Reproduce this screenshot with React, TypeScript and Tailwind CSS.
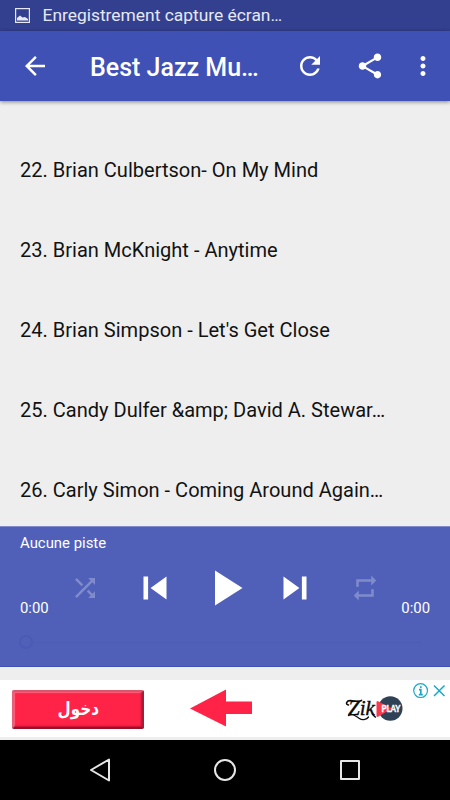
import React from 'react';

interface IconProps {
  path: string;
  className?: string;
}

const ICONS = {
  back: 'M20 11H7.83l5.59-5.59L12 4l-8 8 8 8 1.41-1.41L7.83 13H20v-2z',
  refresh:
    'M17.65 6.35C16.2 4.9 14.21 4 12 4c-4.42 0-7.99 3.58-7.99 8s3.57 8 7.99 8c3.73 0 6.84-2.55 7.73-6h-2.08c-.82 2.33-3.04 4-5.65 4-3.31 0-6-2.69-6-6s2.69-6 6-6c1.66 0 3.14.69 4.22 1.78L13 11h7V4l-2.35 2.35z',
  share:
    'M18 16.08c-.76 0-1.44.3-1.96.77L8.91 12.7c.05-.23.09-.46.09-.7s-.04-.47-.09-.7l7.05-4.11c.54.5 1.25.81 2.04.81 1.66 0 3-1.34 3-3s-1.34-3-3-3-3 1.34-3 3c0 .24.04.47.09.7L8.04 9.81C7.5 9.31 6.79 9 6 9c-1.66 0-3 1.34-3 3s1.34 3 3 3c.79 0 1.5-.31 2.04-.81l7.12 4.16c-.05.21-.08.43-.08.65 0 1.61 1.31 2.92 2.92 2.92 1.61 0 2.92-1.31 2.92-2.92s-1.31-2.92-2.92-2.92z',
  more: 'M12 8c1.1 0 2-.9 2-2s-.9-2-2-2-2 .9-2 2 .9 2 2 2zm0 2c-1.1 0-2 .9-2 2s.9 2 2 2 2-.9 2-2-.9-2-2-2zm0 6c-1.1 0-2 .9-2 2s.9 2 2 2 2-.9 2-2-.9-2-2-2z',
  shuffle:
    'M10.59 9.17L5.41 4 4 5.41l5.17 5.17 1.42-1.41zM14.5 4l2.04 2.04L4 18.59 5.41 20 17.96 7.46 20 9.5V4h-5.5zm.33 9.41l-1.41 1.41 3.13 3.13L14.5 20H20v-5.5l-2.04 2.04-3.13-3.13z',
  previous: 'M6 6h2.4v12H6zM9.7 12l8.3 6V6z',
  play: 'M8 5v14l11-7z',
  next: 'M6 18l8.3-6L6 6zM15.6 6H18v12h-2.4z',
  repeat: 'M7 7h10v3l4-4-4-4v3H5v6h2V7zm10 10H7v-3l-4 4 4 4v-3h12v-6h-2v4z',
};

const tracks = [
  '22. Brian Culbertson- On My Mind',
  '23. Brian McKnight - Anytime',
  "24. Brian Simpson - Let's Get Close",
  '25. Candy Dulfer &amp; David A. Stewar…',
  '26. Carly Simon - Coming Around Again…',
];

function Icon({ path, className = 'size-[30px]' }: IconProps) {
  return (
    <svg viewBox="0 0 24 24" fill="currentColor" className={`shrink-0 ${className}`}>
      <path d={path} />
    </svg>
  );
}

function StatusBar() {
  return (
    <div className="flex h-[31px] items-start bg-[#33408f] pl-[15px] text-[#e6e8f3]">
      <svg viewBox="0 0 15 15" className="mt-[8px] size-[15px] shrink-0">
        <rect x="0.6" y="0.6" width="13.8" height="13.8" fill="none" stroke="currentColor" strokeWidth="1.2" />
        <path d="M2 12.5V10L5 7.5L7.5 9.5L10 9L13 11V12.5Z" fill="currentColor" />
      </svg>
      <span className="ml-[12.5px] text-[17.4px] leading-[30px]">Enregistrement capture écran…</span>
    </div>
  );
}

function AppBar() {
  return (
    <div className="relative flex h-[70px] items-center bg-[#3f51b5] pl-5 text-white shadow-[0_1px_4px_rgba(0,0,0,0.45)]">
      <Icon path={ICONS.back} />
      <h1 className="ml-10 w-[205px] pt-[3px] text-[25px] leading-[30px] font-medium">Best Jazz Mu…</h1>
      <Icon path={ICONS.refresh} />
      <Icon path={ICONS.share} className="ml-[30px] size-[30px]" />
      <Icon path={ICONS.more} className="ml-[22.5px] size-[30px]" />
    </div>
  );
}

function Player() {
  return (
    <div className="flex h-[141px] flex-col border-t border-b border-t-[#7f8bcb] border-b-[#3f51b5] bg-[#5060b9] text-[14.9px] text-white">
      <div className="h-[30px] px-5 pt-[6px] leading-5">Aucune piste</div>
      <div className="flex h-[61px] justify-between px-5">
        <span className="w-[30px] self-end leading-5">0:00</span>
        <div className="flex items-center">
          <div className="flex w-[70px] justify-center text-[#808bcb]">
            <Icon path={ICONS.shuffle} />
          </div>
          <div className="flex w-[70px] justify-center">
            <Icon path={ICONS.previous} className="size-[46px]" />
          </div>
          <div className="flex w-[70px] justify-center">
            <Icon path={ICONS.play} className="size-[60px]" />
          </div>
          <div className="flex w-[70px] justify-center">
            <Icon path={ICONS.next} className="size-[46px]" />
          </div>
          <div className="flex w-[70px] justify-center text-[#808bcb]">
            <Icon path={ICONS.repeat} />
          </div>
        </div>
        <span className="w-[30px] self-end text-right leading-5">0:00</span>
      </div>
      {/* Seek bar, disabled until a track is loaded */}
      <div className="mt-[17px] flex items-center px-[19px]">
        <div className="size-[14px] rounded-full border-2 border-[#4b5bb5]" />
        <div className="h-px w-[388px] bg-[#4d5db6]" />
      </div>
    </div>
  );
}

function ZikPlayLogo() {
  return (
    <svg viewBox="0 0 58 30" className="h-[30px] w-[58px]">
      <circle cx="45.3" cy="14.5" r="12.2" fill="#2f4156" />
      <path d="M31.5 7.5Q32 7 33 7.3L47 14.5L33 22.8Q31.5 23.3 31.5 22Z" fill="#f9384b" />
      <g fill="none" stroke="#0b0b0b" strokeLinecap="round" strokeLinejoin="round">
        <path d="M3.5 11C0 10.5 1.5 6.4 5.5 6.6C9 7.2 12.5 8.2 16.5 6.4" strokeWidth="1.6" />
        <path d="M3.5 21.5C7 19 10 21.5 14 24.2C18 27.2 22 25 23.5 23" strokeWidth="1.3" />
        <path d="M27.5 19.5C28.2 21.3 29 22.5 30.3 23" strokeWidth="1.5" />
      </g>
      <text
        x="3"
        y="21"
        textLength="27"
        lengthAdjust="spacingAndGlyphs"
        fill="#0b0b0b"
        stroke="#0b0b0b"
        strokeWidth="0.4"
        className="font-['Liberation_Serif',serif] text-[22px] italic"
      >
        Zik
      </text>
      <text
        x="36.5"
        y="18"
        textLength="19"
        lengthAdjust="spacingAndGlyphs"
        fill="#fff"
        stroke="#fff"
        strokeWidth="0.3"
        className="font-['Lato',sans-serif] text-[9px] font-black"
      >
        PLAY
      </text>
    </svg>
  );
}

function AdBanner() {
  return (
    <div className="mt-[13px] flex h-[57px] items-start bg-white">
      <div className="mt-[10px] ml-3 flex h-[39px] w-[132px] items-center justify-center rounded-[2px] border-2 border-t-[#d9566e] border-r-[#a91c39] border-b-[#95122c] border-l-[#e8607a] bg-[#ff2348] shadow-[inset_-1px_-1px_2px_rgba(120,0,30,0.5),inset_1px_1px_1px_rgba(255,255,255,0.3)]">
        <span
          dir="rtl"
          className="origin-center scale-x-[0.82] pb-[2px] font-['DejaVu_Sans',sans-serif] text-[18.5px] leading-5 font-bold text-white"
        >
          دخول
        </span>
      </div>
      <svg viewBox="0 0 62 38" className="mt-[9px] ml-[46px] h-[38px] w-[62px]">
        <path d="M0 19.5L36 0.5V12.5H62V25H36V37.5Z" fill="#ff2348" />
      </svg>
      <div className="mt-[14px] ml-[93px]">
        <ZikPlayLogo />
      </div>
      <svg viewBox="0 0 34 16" fill="none" stroke="#16a9cd" className="mt-[3px] ml-[10px] h-4 w-[34px]">
        <circle cx="7.6" cy="7.6" r="6.9" strokeWidth="1.2" />
        <path d="M7.8 3.2V5M6 6.6H7.8V11.6M5.8 11.6H9.8" strokeWidth="1.7" />
        <path d="M21 2.5L31.5 13M31.5 2.5L21 13" strokeWidth="1.5" />
      </svg>
    </div>
  );
}

function NavigationBar() {
  return (
    <div className="mt-[3px] flex h-[60px] items-center justify-center gap-[95px] bg-black">
      <svg viewBox="0 0 30 30" fill="none" stroke="#e6e6e6" strokeWidth="2" strokeLinejoin="round" className="size-[30px]">
        <path d="M6 15L24 4.5V25.5Z" />
      </svg>
      <svg viewBox="0 0 30 30" fill="none" stroke="#e6e6e6" strokeWidth="2" className="size-[30px]">
        <circle cx="15" cy="15" r="10" />
      </svg>
      <svg viewBox="0 0 30 30" fill="none" stroke="#e6e6e6" strokeWidth="2" strokeLinejoin="round" className="size-[30px]">
        <rect x="6" y="6" width="18" height="18" />
      </svg>
    </div>
  );
}

export default function App() {
  return (
    <div className="flex h-[800px] w-[450px] flex-col overflow-hidden bg-[#eeeeee] font-['Roboto',sans-serif]">
      <StatusBar />
      <AppBar />

      {/* Track list */}
      <ul className="h-[425px] overflow-hidden pt-[29px]">
        {tracks.map((track) => (
          <li key={track} className="flex h-20 items-center px-5 text-[20.05px] whitespace-nowrap text-[#121212]">
            {track}
          </li>
        ))}
      </ul>

      <Player />
      <AdBanner />
      <NavigationBar />
    </div>
  );
}
